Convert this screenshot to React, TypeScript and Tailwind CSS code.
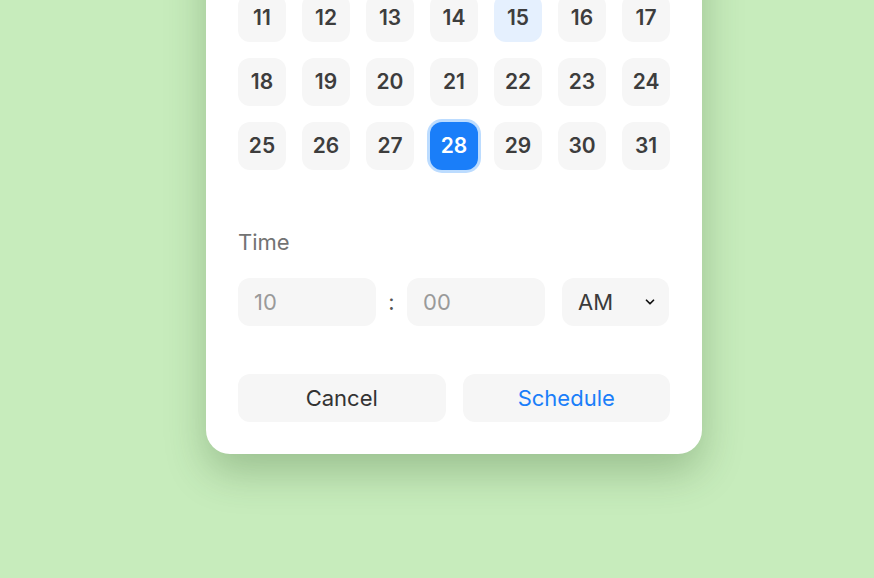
import { ChevronDown, ChevronLeft, ChevronRight } from "lucide-react";

const weekdays = ["Su", "Mo", "Tu", "We", "Th", "Fr", "Sa"];
const days: (number | null)[] = [
  null, null, null, null, 1, 2, 3,
  4, 5, 6, 7, 8, 9, 10,
  11, 12, 13, 14, 15, 16, 17,
  18, 19, 20, 21, 22, 23, 24,
  25, 26, 27, 28, 29, 30, 31,
];

const TODAY = 15;
const SELECTED = 28;

function DayCell({ day }: { day: number | null }) {
  if (day === null) return <div className="h-12 w-12" />;
  if (day === SELECTED) {
    return (
      <button className="flex h-12 w-12 items-center justify-center rounded-[12px] bg-[#1a7ef9] text-[21px] font-semibold text-white ring-[3px] ring-[#bcdcff]">
        {day}
      </button>
    );
  }
  if (day === TODAY) {
    return (
      <button className="flex h-12 w-12 items-center justify-center rounded-[12px] bg-[#e5f0fe] text-[21px] font-semibold text-[#3d3d3d]">
        {day}
      </button>
    );
  }
  return (
    <button className="flex h-12 w-12 items-center justify-center rounded-[12px] bg-[#f6f6f6] text-[21px] font-semibold text-[#3d3d3d]">
      {day}
    </button>
  );
}

export default function App() {
  return (
    <div
      className="flex h-[578px] w-full flex-col items-center justify-end overflow-hidden bg-[#c7ecbc] pb-[124px] pl-[34px]"
      style={{ fontFamily: "Inter, 'Noto Sans', sans-serif" }}
    >
      <div className="w-[496px] shrink-0 rounded-[24px] bg-white p-8 shadow-[0_18px_40px_rgba(40,80,30,0.28)]">
        {/* Header */}
        <div className="mb-6 flex items-center justify-between">
          <button className="flex h-10 w-10 items-center justify-center rounded-[12px] bg-[#f6f6f6] text-[#3b3b3b]">
            <ChevronLeft size={20} />
          </button>
          <h2 className="text-[22px] font-semibold text-[#2b2b2b]">May 2025</h2>
          <button className="flex h-10 w-10 items-center justify-center rounded-[12px] bg-[#f6f6f6] text-[#3b3b3b]">
            <ChevronRight size={20} />
          </button>
        </div>

        {/* Weekdays */}
        <div className="mb-4 grid grid-cols-7 gap-4">
          {weekdays.map((w) => (
            <div key={w} className="w-12 text-center text-[16px] text-[#8a8a8a]">
              {w}
            </div>
          ))}
        </div>

        {/* Days */}
        <div className="grid grid-cols-7 gap-4">
          {days.map((d, i) => (
            <DayCell key={i} day={d} />
          ))}
        </div>

        {/* Time */}
        <div className="mt-[58px]">
          <p className="text-[22px] leading-[28px] text-[#737373]">Time</p>
          <div className="mt-[22px] flex items-center">
            <input
              type="text"
              placeholder="10"
              className="h-12 w-[138px] rounded-[12px] bg-[#f6f6f6] px-4 text-[22px] text-[#3b3b3b] placeholder:text-[#9a9a9a] focus:outline-none"
            />
            <span className="w-[31px] text-center text-[22px] text-[#555]">:</span>
            <input
              type="text"
              placeholder="00"
              className="h-12 w-[138px] rounded-[12px] bg-[#f6f6f6] px-4 text-[22px] text-[#3b3b3b] placeholder:text-[#9a9a9a] focus:outline-none"
            />
            <div className="ml-[17px] flex h-12 w-[107px] items-center justify-between rounded-[12px] bg-[#f6f6f6] pl-4 pr-3 text-[22px] text-[#3b3b3b]">
              <span>AM</span>
              <ChevronDown size={14} strokeWidth={3} className="text-[#111]" />
            </div>
          </div>
        </div>

        {/* Actions */}
        <div className="mt-12 grid grid-cols-2 gap-[17px]">
          <button className="h-12 rounded-[12px] bg-[#f6f6f6] text-[22px] text-[#333]">Cancel</button>
          <button className="h-12 rounded-[12px] bg-[#f6f6f6] text-[22px] text-[#1a7ef9]">Schedule</button>
        </div>
      </div>
    </div>
  );
}
